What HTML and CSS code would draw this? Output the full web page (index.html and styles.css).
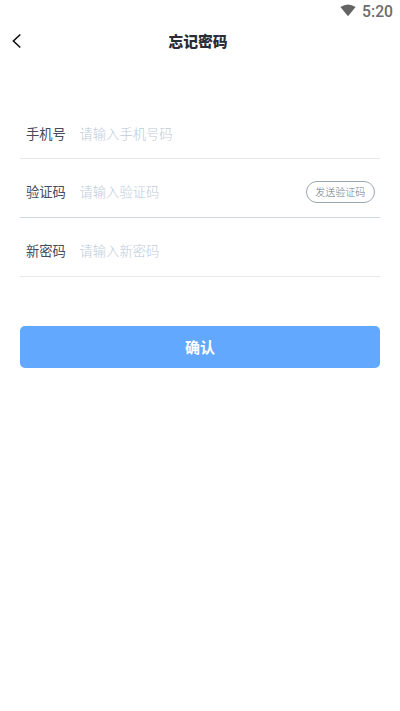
FILE: index.html
```html
<!DOCTYPE html>
<html lang="zh-CN">
<head>
<meta charset="utf-8">
<title>忘记密码</title>
<link rel="stylesheet" href="styles.css">
</head>
<body>
<div class="status">
  <svg class="wifi" width="16" height="13" viewBox="0 0 16 13"><path d="M8 12.2 0.4 3Q8-2.2 15.6 3Z"/></svg>
  <span class="time">5:20</span>
</div>
<header class="nav">
  <svg class="back" width="10" height="16" viewBox="0 0 10 16"><path d="M8.3 1.5 1.4 8l6.9 6.5"/></svg>
  <h1 class="title">忘记密码</h1>
</header>
<form class="form">
  <div class="row row-phone"><span class="label">手机号</span><span class="hint">请输入手机号码</span></div>
  <div class="row row-code"><span class="label">验证码</span><span class="hint">请输入验证码</span><button class="send" type="button">发送验证码</button></div>
  <div class="row"><span class="label">新密码</span><span class="hint">请输入新密码</span></div>
  <button class="confirm" type="button">确认</button>
</form>
</body>
</html>
```
FILE: styles.css
```css
* { box-sizing: border-box; }
body { margin: 0; background: #fff; font-family: "Noto Sans CJK SC", sans-serif; }
.status { height: 22px; padding: 0 7px 0 0; display: flex; justify-content: flex-end; align-items: center; gap: 6px; }
.wifi { fill: #646464; margin-bottom: 2px; }
.time { padding-top: 1px; font: 500 15.7px/22px Roboto, sans-serif; color: #6c6c6c; }
.nav { height: 38px; padding: 0 12px; display: grid; grid-template-columns: 10px 1fr 10px; align-items: center; }
.back { fill: none; stroke: #111; stroke-width: 1.6; }
.title { margin: 0; padding-right: 4px; text-align: center; font-size: 14.8px; line-height: 20px; font-weight: 900; color: #2b2c36; }
.form { padding: 40px 20px 0; }
.row { height: 59px; padding: 7px 5px 0 6px; border-bottom: 1px solid #e6e8ea; display: flex; align-items: center; font-size: 13.3px; line-height: 20px; }
.row-phone { padding-top: 9px; }
.row-code { border-color: #d0d6da; }
.label { width: 53.5px; color: #454a5c; }
.hint { flex: 1; color: #bccad9; font-weight: 300; }
.send { width: 69.5px; height: 22px; padding: 0; border: 1px solid #9ba8b4; border-radius: 11px; background: #fff; font: 300 10px/18px "Noto Sans CJK SC", sans-serif; color: #6b7886; }
.confirm { display: block; width: 100%; height: 42px; margin-top: 49px; padding: 0; border: 0; border-radius: 5px; background: #62a8ff; color: #fff; font: 700 15px/42px "Noto Sans CJK SC", sans-serif; }
```
